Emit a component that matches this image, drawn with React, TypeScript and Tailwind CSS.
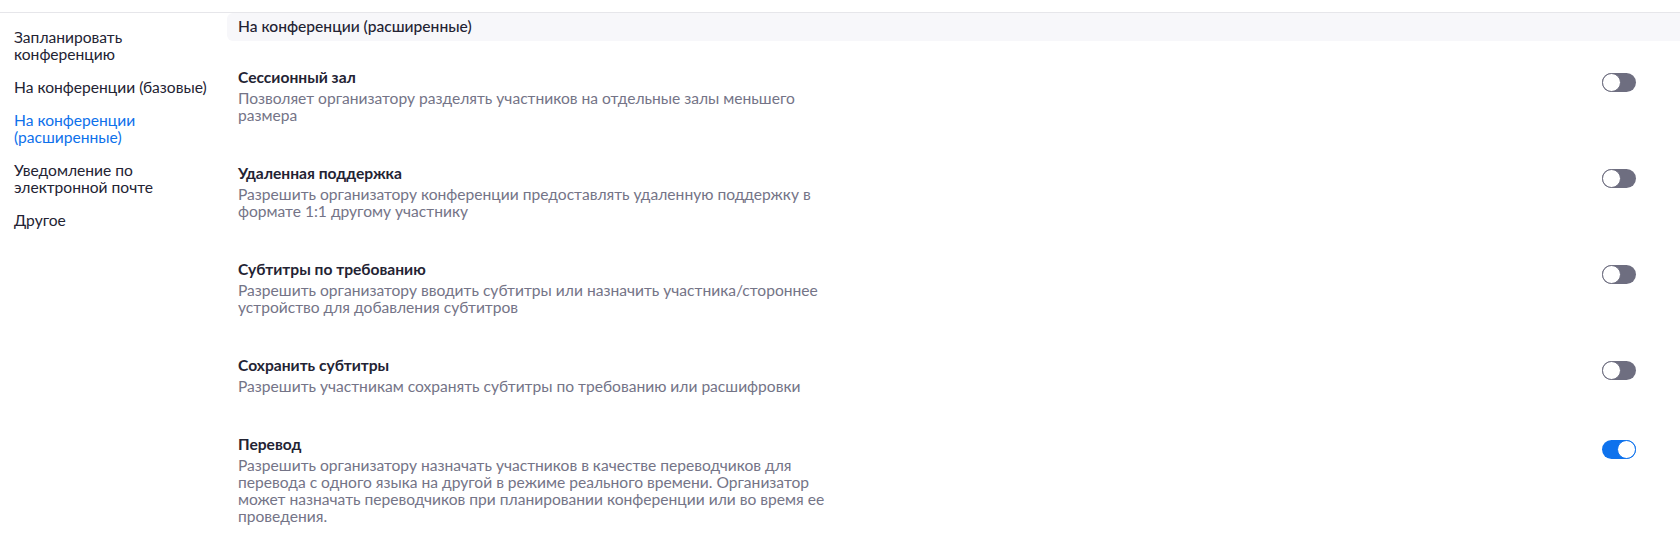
import { useState } from 'react';

type Setting = {
  id: string;
  title: string;
  description: string;
  enabled: boolean;
};

const sidebarItems = [
  'Запланировать конференцию',
  'На конференции (базовые)',
  'На конференции (расширенные)',
  'Уведомление по электронной почте',
  'Другое',
];

const initialSettings: Setting[] = [
  {
    id: 'breakout',
    title: 'Сессионный зал',
    description: 'Позволяет организатору разделять участников на отдельные залы меньшего размера',
    enabled: false,
  },
  {
    id: 'remote-support',
    title: 'Удаленная поддержка',
    description:
      'Разрешить организатору конференции предоставлять удаленную поддержку в формате 1:1 другому участнику',
    enabled: false,
  },
  {
    id: 'captions',
    title: 'Субтитры по требованию',
    description:
      'Разрешить организатору вводить субтитры или назначить участника/стороннее устройство для добавления субтитров',
    enabled: false,
  },
  {
    id: 'save-captions',
    title: 'Сохранить субтитры',
    description: 'Разрешить участникам сохранять субтитры по требованию или расшифровки',
    enabled: false,
  },
  {
    id: 'interpretation',
    title: 'Перевод',
    description:
      'Разрешить организатору назначать участников в качестве переводчиков для перевода с одного языка на другой в режиме реального времени. Организатор может назначать переводчиков при планировании конференции или во время ее проведения.',
    enabled: true,
  },
];

const Toggle = ({ on, onClick }: { on: boolean; onClick: () => void }) => (
  <button
    onClick={onClick}
    aria-pressed={on}
    className={`mt-[6px] flex h-[19px] w-[34px] shrink-0 items-center rounded-full ${
      on ? 'justify-end bg-[#0e72ed]' : 'justify-start bg-[#6e6e80]'
    }`}
  >
    <span
      className={`block h-[19px] w-[19px] rounded-full border-[1.5px] bg-white ${
        on ? 'border-[#0e72ed]' : 'border-[#6e6e80]'
      }`}
    />
  </button>
);

export default function App() {
  const [settings, setSettings] = useState(initialSettings);
  const active = 2;

  const toggle = (id: string) =>
    setSettings((prev) => prev.map((s) => (s.id === id ? { ...s, enabled: !s.enabled } : s)));

  return (
    <div className="h-[536px] w-full overflow-hidden bg-white font-['Lato','Noto_Sans',sans-serif] text-[#232333]">
      <div className="h-3 w-full" />
      <div className="flex border-t border-[#e6e6ea]">
        {/* left nav */}
        <nav className="w-[227px] shrink-0 pl-[14px] pr-3 pt-[16px]">
          <ul className="flex flex-col gap-4">
            {sidebarItems.map((item, i) => (
              <li
                key={item}
                className={`cursor-pointer text-[15.6px] leading-[17px] ${
                  i === active ? 'text-[#0e71eb]' : 'text-[#232333]'
                }`}
              >
                {item}
              </li>
            ))}
          </ul>
        </nav>

        {/* settings */}
        <main className="flex-1">
          <div className="flex h-7 items-center rounded-l-md bg-[#f7f7fa] pl-[11px] text-[15.6px] font-medium">
            На конференции (расширенные)
          </div>
          <div className="mt-[26px] pl-[11px] pr-[44px]">
            {settings.map((s) => (
              <div key={s.id} className="flex justify-between pb-[39px]">
                <div className="w-[600px]">
                  <div className="text-[15.6px] font-bold leading-5">{s.title}</div>
                  <p className="mt-[3px] text-[15.6px] leading-[17px] text-[#747487]">{s.description}</p>
                </div>
                <Toggle on={s.enabled} onClick={() => toggle(s.id)} />
              </div>
            ))}
          </div>
        </main>
      </div>
    </div>
  );
}
